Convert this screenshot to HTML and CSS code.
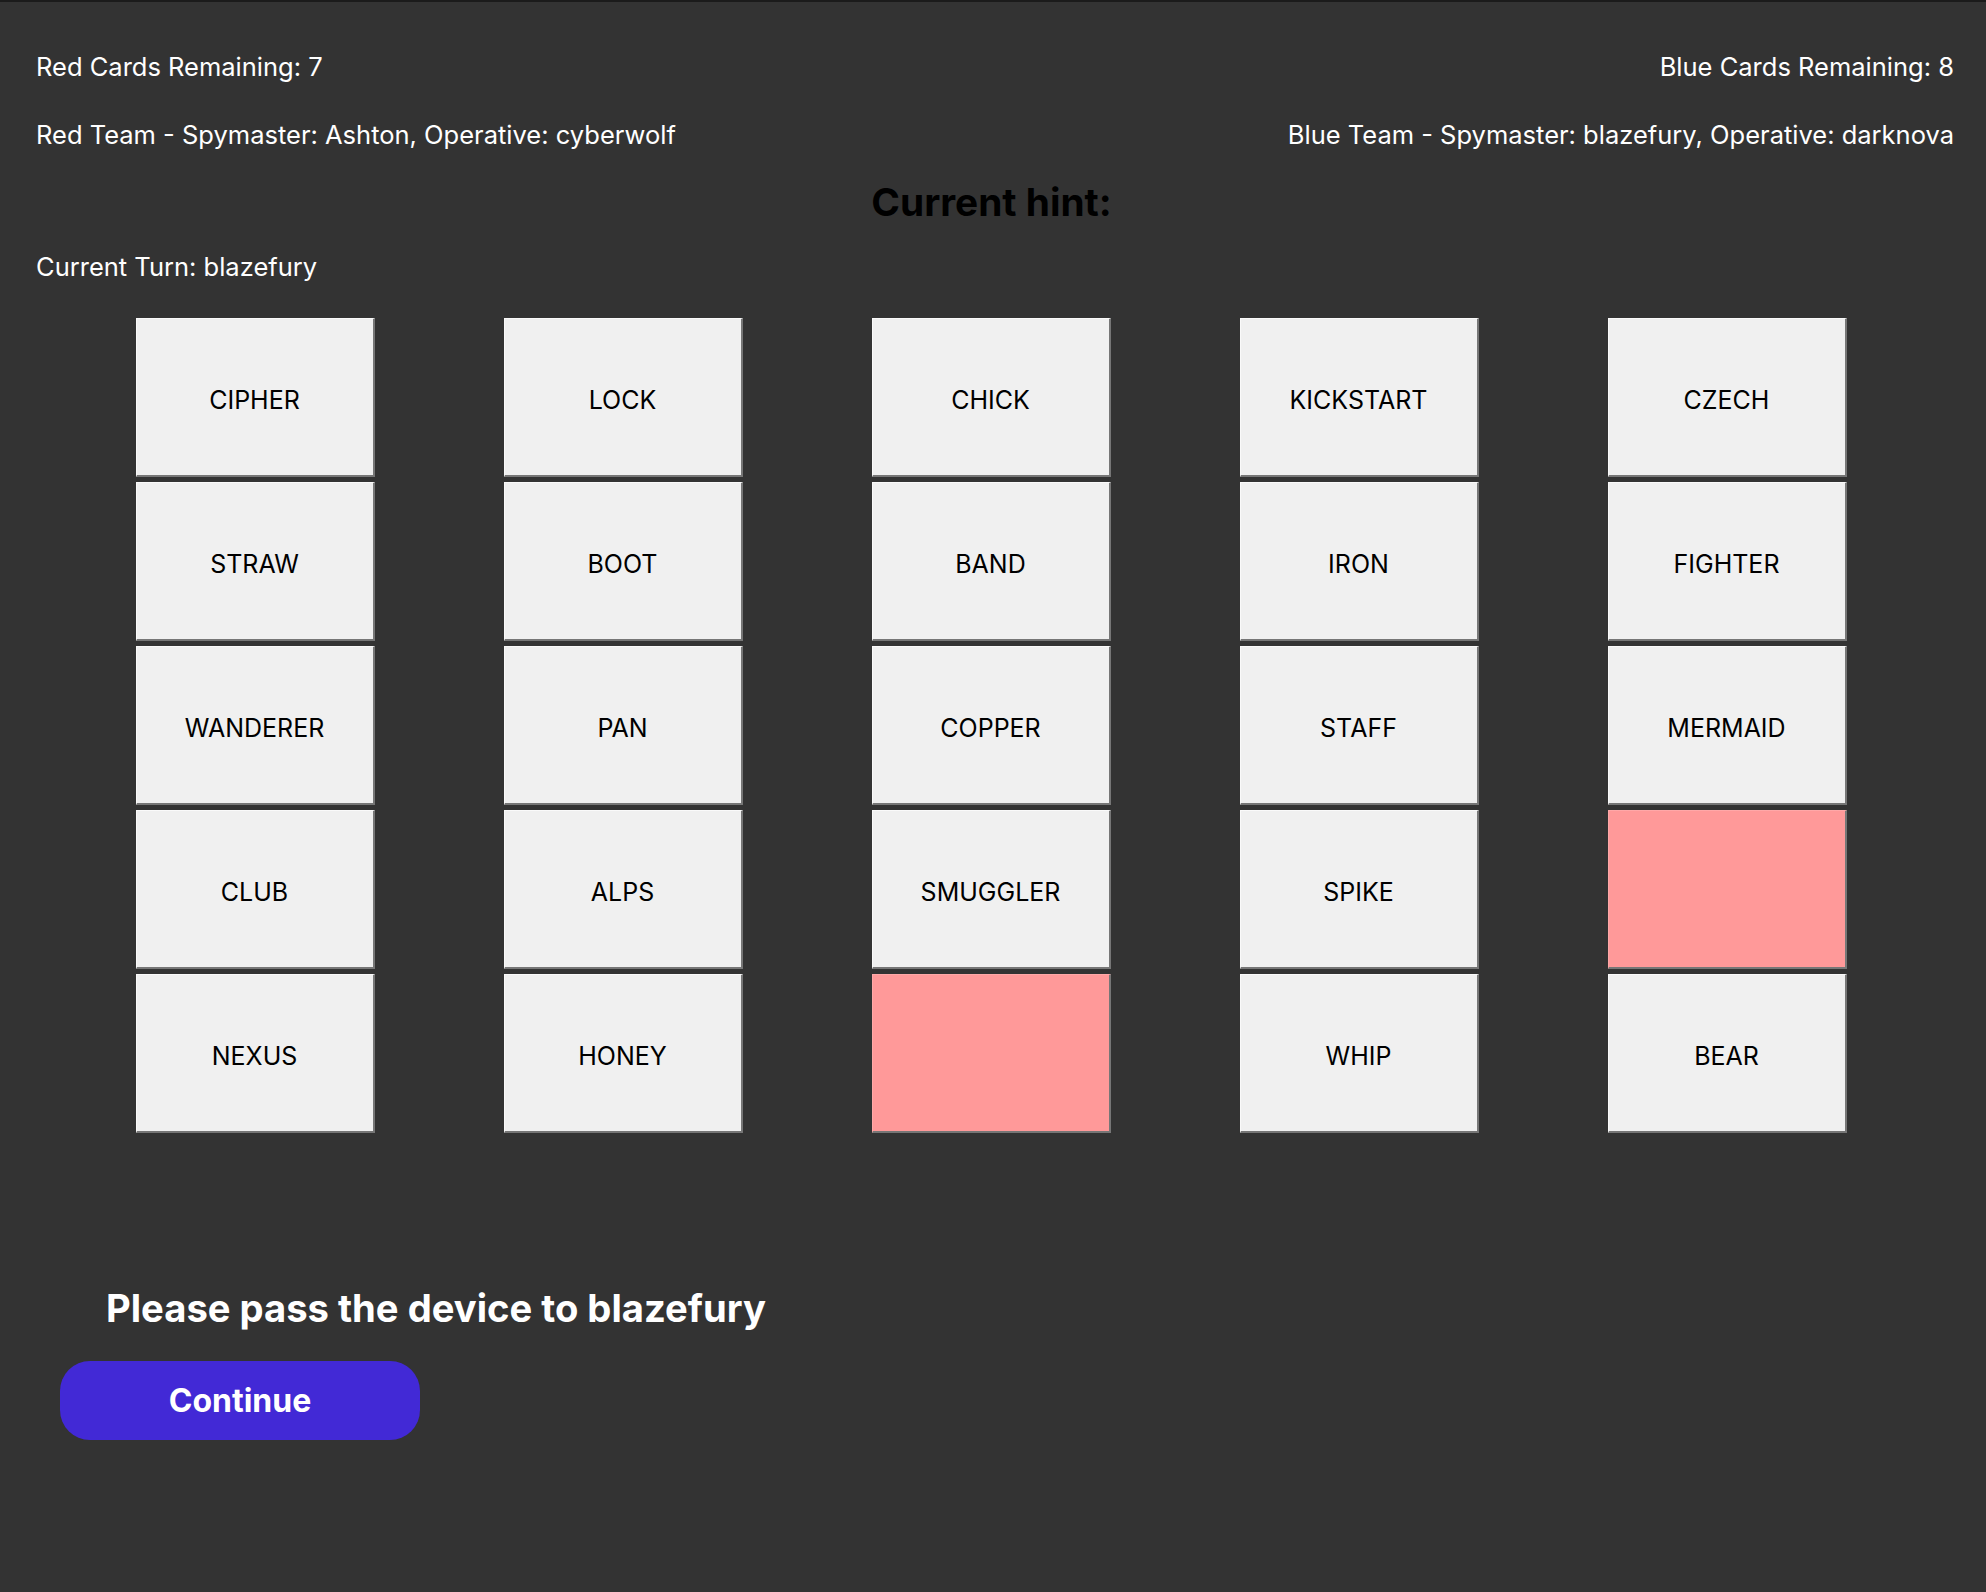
FILE: index.html
```html
<!DOCTYPE html>
<html lang="en">
<head>
<meta charset="utf-8">
<title>Codenames</title>
<link rel="stylesheet" href="styles.css">
</head>
<body>
<div class="app">
  <header class="teams">
    <div class="team team-red">
      <p class="line">Red Cards Remaining: 7</p>
      <p class="line">Red Team - Spymaster: Ashton, Operative: cyberwolf</p>
    </div>
    <div class="team team-blue">
      <p class="line">Blue Cards Remaining: 8</p>
      <p class="line">Blue Team - Spymaster: blazefury, Operative: darknova</p>
    </div>
  </header>
  <h2 class="hint">Current hint:</h2>
  <p class="line turn">Current Turn: blazefury</p>
  <div class="board">
    <div class="card">CIPHER</div>
    <div class="card">LOCK</div>
    <div class="card">CHICK</div>
    <div class="card">KICKSTART</div>
    <div class="card">CZECH</div>
    <div class="card">STRAW</div>
    <div class="card">BOOT</div>
    <div class="card">BAND</div>
    <div class="card">IRON</div>
    <div class="card">FIGHTER</div>
    <div class="card">WANDERER</div>
    <div class="card">PAN</div>
    <div class="card">COPPER</div>
    <div class="card">STAFF</div>
    <div class="card">MERMAID</div>
    <div class="card">CLUB</div>
    <div class="card">ALPS</div>
    <div class="card">SMUGGLER</div>
    <div class="card">SPIKE</div>
    <div class="card card-red"></div>
    <div class="card">NEXUS</div>
    <div class="card">HONEY</div>
    <div class="card card-red"></div>
    <div class="card">WHIP</div>
    <div class="card">BEAR</div>
  </div>
  <section class="handoff">
    <h2 class="handoff-title">Please pass the device to blazefury</h2>
    <button class="continue" type="button">Continue</button>
  </section>
</div>
</body>
</html>
```
FILE: styles.css
```css
* { box-sizing: border-box; }

html, body {
  margin: 0;
  padding: 0;
  background: #333333;
}

body {
  min-height: 1592px;
  border-top: 2px solid #1b1b1b;
  font-family: Inter, "Liberation Sans", sans-serif;
  color: #ffffff;
}

.app {
  padding: 0 32px 0 36px;
}

.line {
  margin: 0;
  font-size: 25.5px;
  line-height: 32px;
}

.teams {
  display: flex;
  justify-content: space-between;
  padding-top: 49px;
}

.team {
  display: flex;
  flex-direction: column;
  gap: 36px;
}

.team-blue { text-align: right; }

.hint {
  margin: 28px 7px 0 0;
  text-align: center;
  color: #000000;
  font-size: 38.8px;
  line-height: 46px;
  font-weight: 700;
}

.turn {
  margin-top: 26px;
}

.board {
  display: grid;
  grid-template-columns: repeat(5, 239px);
  grid-auto-rows: 159px;
  column-gap: 129px;
  row-gap: 5px;
  justify-content: center;
  margin-top: 35px;
  margin-left: -38px;
  margin-right: -30px;
}

.card {
  display: flex;
  align-items: center;
  justify-content: center;
  padding-top: 5px;
  background: #f0f0f0;
  color: #000000;
  font-size: 25px;
  border-style: solid;
  border-width: 1px 2px 2px 1px;
  border-color: #fafafa #767676 #767676 #fafafa;
}

.card-red {
  background: #ff9999;
  border-color: #ffa8a8 #767676 #767676 #ffa8a8;
}

.handoff {
  padding-top: 151px;
  padding-left: 24px;
}

.handoff-title {
  margin: 0 0 0 46px;
  font-size: 38.2px;
  line-height: 48px;
  font-weight: 700;
  color: #ffffff;
}

.continue {
  display: block;
  margin-top: 29px;
  width: 360px;
  height: 79px;
  border: none;
  border-radius: 30px;
  background: #4229d6;
  color: #ffffff;
  font-family: Inter, "Liberation Sans", sans-serif;
  font-size: 32px;
  font-weight: 700;
}
```
